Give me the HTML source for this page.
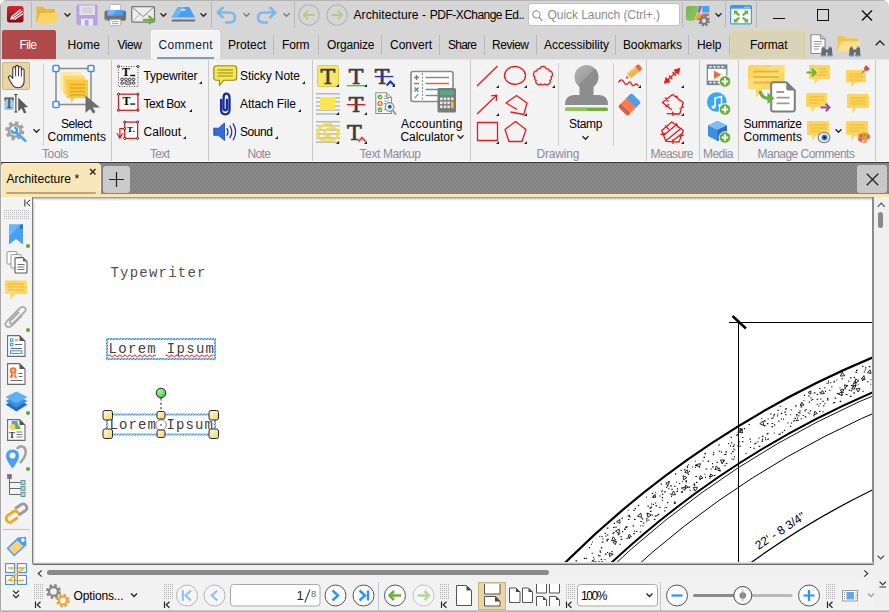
<!DOCTYPE html>
<html><head><meta charset="utf-8"><title>Architecture - PDF-XChange Editor</title>
<style>
*{box-sizing:border-box;margin:0;padding:0}
html,body{width:889px;height:612px;overflow:hidden;background:#fff;font-family:"Liberation Sans",sans-serif;font-size:12px;color:#000}
#app{position:relative;width:889px;height:612px;overflow:hidden;background:#d6d6d6;border-radius:7px 7px 0 0}
#app div,#app span,#app svg{position:absolute}
#app svg{overflow:visible}
#titlebar{left:0;top:0;width:889px;height:30px;background:#d6d6d6}
#tabrow{left:0;top:30px;width:889px;height:30px;background:#d6d6d6}
#ribbon{left:0;top:59px;width:889px;height:103px;background:#f3f3f3;border-top:1px solid #e5e5e5;border-bottom:1px solid #fdfdfd}
#doctabs{left:0;top:162px;width:889px;height:32px;background:#868686}
#yline{left:0;top:194px;width:889px;height:3px;background:#fae6b4}
#sidebar{left:0;top:197px;width:33px;height:415px;background:#f3f3f3}
#doc{left:32px;top:197px;width:840px;height:367px;background:linear-gradient(to right,#c8c8c8 0,#f0f0f0 1.500px,#fff 3px);border-left:1px solid #7c7c7c;overflow:hidden}
#vscroll{left:872px;top:197px;width:17px;height:415px;background:#f0f0f0}
#hscroll{left:33px;top:562px;width:840px;height:18px;background:#f0f0f0}
#bottombar{left:33px;top:580px;width:840px;height:32px;background:#f2f2f2}
.t{white-space:nowrap;line-height:16px;height:16px}
.vs{width:1px;background:#b9b9b9}
.chev{width:7px;height:4px}
.gd{width:4px;height:4px;border-radius:2px;background:#5aa52e}
.tri{width:0;height:0;border-left:3.500px solid transparent;border-bottom:3.500px solid #222;margin:0.500px 0 0 0}
</style></head><body>
<div id="app">
<!--TITLEBAR-->
<div style="left:0;top:0;width:1px;height:612px;background:#a8a8a8;z-index:5"></div>
<div style="left:0;top:610px;width:889px;height:2px;background:linear-gradient(to bottom,#d0d0d0,#a8a8a8);z-index:5"></div>
<div style="left:0;top:0;width:889px;height:1px;background:#b4b4b4;z-index:5"></div>
<div id="titlebar">
<!-- app icon -->
<svg style="left:7px;top:5.500px" width="17" height="17" viewBox="0 0 17 17"><defs><linearGradient id="gApp" x1="0" y1="0" x2="0" y2="1"><stop offset="0" stop-color="#d8242e"/><stop offset="0.550" stop-color="#b01820"/><stop offset="1" stop-color="#7a0a10"/></linearGradient></defs><rect x="0" y="0" width="16.500" height="16.500" rx="2.500" fill="url(#gApp)"/><path d="M5 10.500 L13.500 3.800 M6.300 12 L15 5.500 M7.800 13.300 L15.500 8" stroke="#fff" stroke-width="1.300" stroke-linecap="round" fill="none"/><path d="M3 13.500 L4.300 10 L7.500 13.300 Z" fill="#fff"/></svg>
<div class="vs" style="left:31px;top:2px;height:26px"></div>
<!-- folder -->
<svg style="left:36px;top:6px" width="24" height="18" viewBox="0 0 24 18"><path d="M0.5 2 Q0.5 0.8 1.7 0.8 L7 0.8 L9 3 L18 3 Q19 3 19 4 L19 17 L0.5 17 Z" fill="#e9b83a"/><path d="M4.2 7 L23.3 7 L19.3 17.3 L0.6 17.3 Z" fill="#fcd462"/></svg>
<svg class="chev" style="left:64px;top:13px" viewBox="0 0 7 4"><path d="M0.5 0.3 L3.5 3.3 L6.5 0.3" stroke="#222" stroke-width="1.3" fill="none"/></svg>
<!-- save -->
<svg style="left:76px;top:4px" width="22" height="22" viewBox="0 0 22 22"><path d="M0.300 2 Q0.300 0.400 1.900 0.400 L20 0.400 Q21.700 0.400 21.700 2 L21.700 20 Q21.700 21.600 20 21.600 L2.500 21.600 L0.300 19.500 Z" fill="#b8a3dc"/><rect x="3.400" y="1.600" width="15.600" height="9.400" rx="0.800" fill="#e3e2e8"/><path d="M6 4.200 H16.500 M6 6.300 H16.500 M6 8.400 H16.500" stroke="#c4c2cc" stroke-width="0.900"/><rect x="5" y="14.700" width="12" height="7" fill="#ece9f5"/><rect x="8.800" y="16" width="3.700" height="5.600" fill="#b8a3dc"/></svg>
<!-- printer -->
<svg style="left:104px;top:4px" width="23" height="22" viewBox="0 0 23 22"><rect x="0.500" y="6.600" width="21.500" height="10.200" rx="2" fill="#707070"/><rect x="5.700" y="0.500" width="11" height="6.500" rx="0.800" fill="#fdfdfd" stroke="#a8a8a8" stroke-width="0.800"/><rect x="3.500" y="6" width="15.500" height="5.600" fill="#4aa0f0"/><path d="M3.500 6 H12 L8 11.600 H3.500 Z" fill="#72b8f6"/><rect x="5.700" y="15.400" width="11" height="6.200" rx="0.800" fill="#fdfdfd" stroke="#a8a8a8" stroke-width="0.800"/><path d="M7.800 17.600 H14.600 M7.800 19.600 H14.600" stroke="#6ab0f0" stroke-width="1"/><rect x="1.800" y="15.400" width="1.600" height="1" fill="#e8e8e8"/></svg>
<!-- mail -->
<svg style="left:131px;top:6px" width="26" height="19" viewBox="0 0 26 19"><rect x="0.700" y="0.700" width="22.800" height="15.400" rx="1" fill="#ededed" stroke="#7a7a7a" stroke-width="1.300"/><path d="M1 1 L12 10.500 L23 1" stroke="#8a8a8a" stroke-width="1" fill="none"/><path d="M1.200 15.600 L9 8 M23 15.600 L15 8" stroke="#b0b0b0" stroke-width="0.900" fill="none"/><path d="M12 14 H22 M17.800 10.200 L22.200 14 L17.800 17.800" stroke="#6bb03c" stroke-width="2.300" fill="none"/></svg>
<svg class="chev" style="left:160px;top:13px" viewBox="0 0 7 4"><path d="M0.5 0.3 L3.5 3.3 L6.5 0.3" stroke="#222" stroke-width="1.3" fill="none"/></svg>
<!-- scanner -->
<svg style="left:171px;top:6px" width="25" height="16" viewBox="0 0 25 16"><path d="M6.800 1 L18.200 1 L24 11.500 L0.500 11.500 Z" fill="#4aa0f0"/><path d="M6.800 1 L14 1 L6 11.500 L0.500 11.500 Z" fill="#6cb6f6"/><rect x="10" y="3" width="4.400" height="1.600" rx="0.500" fill="#fff"/><rect x="0.500" y="13.400" width="23.800" height="2" rx="1" fill="#6e6e6e"/></svg>
<svg class="chev" style="left:200px;top:13px" viewBox="0 0 7 4"><path d="M0.5 0.3 L3.5 3.3 L6.5 0.3" stroke="#222" stroke-width="1.3" fill="none"/></svg>
<div class="vs" style="left:211px;top:2px;height:26px"></div>
<!-- undo -->
<svg style="left:216px;top:6px" width="21" height="18" viewBox="0 0 21 18"><path d="M7.5 1 L1.8 6.5 L7.5 12 M2.5 6.5 H13 Q19 6.5 19 11.5 Q19 16.5 13 16.5 H9" stroke="#7db9ea" stroke-width="2.6" fill="none" stroke-linejoin="round"/></svg>
<svg class="chev" style="left:243px;top:13px" viewBox="0 0 7 4"><path d="M0.5 0.3 L3.5 3.3 L6.5 0.3" stroke="#7a7a7a" stroke-width="1.3" fill="none"/></svg>
<!-- redo -->
<svg style="left:256px;top:6px" width="21" height="18" viewBox="0 0 21 18"><path d="M13.5 1 L19.2 6.5 L13.5 12 M18.5 6.5 H8 Q2 6.5 2 11.5 Q2 16.5 8 16.5 H12" stroke="#7db9ea" stroke-width="2.6" fill="none" stroke-linejoin="round"/></svg>
<svg class="chev" style="left:283px;top:13px" viewBox="0 0 7 4"><path d="M0.5 0.3 L3.5 3.3 L6.5 0.3" stroke="#7a7a7a" stroke-width="1.3" fill="none"/></svg>
<div class="vs" style="left:294px;top:2px;height:26px"></div>
<!-- nav circles -->
<svg style="left:298px;top:4px" width="22" height="22" viewBox="0 0 22 22"><circle cx="11" cy="11" r="10.2" fill="none" stroke="#b4b4b4" stroke-width="1.1"/><path d="M16.5 11 H6 M10 6.8 L5.8 11 L10 15.2" stroke="#a7cf8a" stroke-width="1.8" fill="none"/></svg>
<svg style="left:326px;top:4px" width="22" height="22" viewBox="0 0 22 22"><circle cx="11" cy="11" r="10.2" fill="none" stroke="#b4b4b4" stroke-width="1.1"/><path d="M5.5 11 H16 M12 6.8 L16.2 11 L12 15.2" stroke="#a7cf8a" stroke-width="1.8" fill="none"/></svg>
<span class="t" style="left:353.5px;top:6.8px;font-size:12px;letter-spacing:0.09px;color:#000;">Architecture - </span><span class="t" style="left:429.8px;top:6.8px;font-size:12px;letter-spacing:-0.53px;color:#000;">PDF-XChange Ed..</span>
<!-- search -->
<div style="left:528px;top:3px;width:152px;height:23px;background:#fff;border:1px solid #c3c3c3;border-radius:3px"></div>
<svg style="left:532px;top:10px" width="11" height="11.800" viewBox="0 0 13 14"><circle cx="5.2" cy="5.2" r="4.3" fill="none" stroke="#8a8a8a" stroke-width="1.2"/><path d="M8.3 8.5 L12.3 13" stroke="#8a8a8a" stroke-width="1.4"/></svg>
<span class="t" style="left:547.5px;top:6.8px;font-size:12px;letter-spacing:-0.06px;color:#8c8c8c;">Quick Launch (Ctrl+.)</span>
<div class="vs" style="left:682px;top:2px;height:26px"></div>
<!-- ui options -->
<svg style="left:686px;top:5px" width="25" height="23" viewBox="0 0 25 23"><path d="M0 2.800 Q0 1 1.800 1 L13 1 L8 15.600 L1.800 15.600 Q0 15.600 0 13.800 Z" fill="#7cb955"/><path d="M0 13 L10 1 L13 1 L8 15.600 L1.800 15.600 Q0 15.600 0 13.800 Z" fill="#8ac463" opacity="0.600"/><path d="M13.600 1 L15.800 1 L13.800 7.500 L11.400 7.500 Z" fill="#8a52c8"/><rect x="16.200" y="1" width="7.200" height="6.500" fill="#4aa3f2"/><path d="M11 8.600 L16 8.600 L14 15 L8.800 15 Z" fill="#f5a623"/><rect x="16.500" y="8.600" width="6.500" height="2.500" fill="#e8604a"/><circle cx="18" cy="15.700" r="4.300" fill="none" stroke="#777" stroke-width="3" stroke-dasharray="1.900 1.480"/><circle cx="18" cy="15.700" r="3.200" fill="#d6d6d6" stroke="#777" stroke-width="1.900"/></svg>
<svg class="chev" style="left:715px;top:13px" viewBox="0 0 7 4"><path d="M0.5 0.3 L3.5 3.3 L6.5 0.3" stroke="#222" stroke-width="1.3" fill="none"/></svg>
<div class="vs" style="left:725px;top:2px;height:26px"></div>
<!-- fullscreen -->
<svg style="left:730px;top:4.500px" width="22" height="19.500" viewBox="0 0 22 19.500"><rect x="0.600" y="0.600" width="20.800" height="18.300" rx="1.200" fill="#fff" stroke="#3d9af0" stroke-width="1.200"/><path d="M0.600 1.800 Q0.600 0.600 1.800 0.600 H20.200 Q21.400 0.600 21.400 1.800 V3.800 H0.600 Z" fill="#3d9af0"/><g fill="#fff"><rect x="14.500" y="1.700" width="1.100" height="1.100"/><rect x="16.600" y="1.700" width="1.100" height="1.100"/><rect x="18.700" y="1.700" width="1.100" height="1.100"/></g><g fill="#6bb03c"><path d="M3.800 5.500 H8.200 L3.800 9.900 Z M18.200 5.500 H13.800 L18.200 9.900 Z M3.800 17.500 H8.200 L3.800 13.100 Z M18.200 17.500 H13.800 L18.200 13.100 Z"/></g><path d="M5.500 7.200 L9.300 10.500 M16.500 7.200 L12.700 10.500 M5.500 15.800 L9.300 12.500 M16.500 15.800 L12.700 12.500" stroke="#6bb03c" stroke-width="2.200"/></svg>
<div class="vs" style="left:756px;top:2px;height:26px"></div>
<!-- window controls -->
<div style="left:773px;top:18px;width:12px;height:1px;background:#111"></div>
<div style="left:817px;top:9px;width:12px;height:12px;border:1.5px solid #111"></div>
<svg style="left:861px;top:10px" width="12" height="11" viewBox="0 0 12 11"><path d="M1 0.5 L11 10.5 M11 0.5 L1 10.5" stroke="#111" stroke-width="1.4"/></svg>
</div>
<!--TABROW-->
<div id="tabrow">
<div style="left:2px;top:0;width:54px;height:29px;background:#b04a4a;border-radius:2px 2px 0 0"></div><div style="left:2px;top:29px;width:54px;height:1px;background:#d09c9c"></div>
<div style="left:151px;top:0;width:69px;height:30px;background:#f3f3f3;border:1px solid #fbfbfb;border-bottom:none;border-radius:3px 3px 0 0"></div>
<div style="left:157px;top:27px;width:56.500px;height:2px;background:#7d9dbf"></div>
<div style="left:732px;top:0;width:73px;height:29px;background:#d9d3b8;border-left:1px solid #e3d28e;border-right:1px solid #e3d28e;border-top:1px solid #e3d9a8"></div>
<div class="vs" style="left:108px;top:5px;height:20px"></div>
<div class="vs" style="left:273px;top:5px;height:20px"></div>
<div class="vs" style="left:318px;top:5px;height:20px"></div>
<div class="vs" style="left:381px;top:5px;height:20px"></div>
<div class="vs" style="left:439px;top:5px;height:20px"></div>
<div class="vs" style="left:484px;top:5px;height:20px"></div>
<div class="vs" style="left:536px;top:5px;height:20px"></div>
<div class="vs" style="left:615px;top:5px;height:20px"></div>
<div class="vs" style="left:688px;top:5px;height:20px"></div>
<div class="vs" style="left:729px;top:5px;height:20px"></div>
</div>
<span class="t" style="left:19.5px;top:36.8px;font-size:12px;letter-spacing:-0.61px;color:#fff;">File</span>
<span class="t" style="left:67.5px;top:36.8px;font-size:12px;letter-spacing:0.16px;color:#000;">Home</span>
<span class="t" style="left:117.5px;top:36.8px;font-size:12px;letter-spacing:-0.43px;color:#000;">View</span>
<span class="t" style="left:158.5px;top:36.8px;font-size:12px;letter-spacing:0.33px;color:#10204a;">Comment</span>
<span class="t" style="left:228.0px;top:36.8px;font-size:12px;letter-spacing:-0.00px;color:#000;">Protect</span>
<span class="t" style="left:282.0px;top:36.8px;font-size:12px;letter-spacing:-0.17px;color:#000;">Form</span>
<span class="t" style="left:327.0px;top:36.8px;font-size:12px;letter-spacing:-0.17px;color:#000;">Organize</span>
<span class="t" style="left:390.0px;top:36.8px;font-size:12px;letter-spacing:-0.00px;color:#000;">Convert</span>
<span class="t" style="left:448.0px;top:36.8px;font-size:12px;letter-spacing:-0.76px;color:#000;">Share</span>
<span class="t" style="left:492.0px;top:36.8px;font-size:12px;letter-spacing:-0.47px;color:#000;">Review</span>
<span class="t" style="left:544.0px;top:36.8px;font-size:12px;letter-spacing:-0.03px;color:#000;">Accessibility</span>
<span class="t" style="left:623.0px;top:36.8px;font-size:12px;letter-spacing:-0.13px;color:#000;">Bookmarks</span>
<span class="t" style="left:697.0px;top:36.8px;font-size:12px;letter-spacing:-0.06px;color:#000;">Help</span>
<span class="t" style="left:750.0px;top:36.8px;font-size:12px;letter-spacing:-0.10px;color:#000;">Format</span>
<!-- find icons -->
<svg style="left:810px;top:34px" width="24" height="23" viewBox="0 0 24 23"><path d="M1 0.7 L10.5 0.7 L15 5 L15 19.5 L1 19.5 Z" fill="#fff" stroke="#8a8a8a" stroke-width="1.1"/><path d="M10.5 0.7 L10.5 5 L15 5" fill="#c8c8c8" stroke="#8a8a8a" stroke-width="0.9"/><path d="M3.5 7.5 H12 M3.5 10 H12 M3.5 12.5 H10 M3.5 15 H9" stroke="#9a9a9a" stroke-width="1"/><g fill="#6a6a6a"><path d="M11 22 L11.600 14 L15 14 L16.200 22 Z M22.500 22 L21.900 14 L18.500 14 L17.300 22 Z"/><rect x="15" y="15.500" width="3.500" height="3"/></g><path d="M12 13.300 H14.800 M18.700 13.300 H21.500 M11.200 21.700 H16 M17.500 21.700 H22.300" stroke="#4a9ff0" stroke-width="1.400"/></svg>
<svg style="left:837px;top:35px" width="25" height="22" viewBox="0 0 25 22"><path d="M0.5 2 Q0.5 1 1.5 1 L7 1 L9 3.2 L20 3.2 Q21 3.2 21 4.2 L21 16.5 L0.5 16.5 Z" fill="#f0c64e"/><path d="M4 6.5 L24 6.5 L20.5 16.8 L0.6 16.8 Z" fill="#fde08a"/><g fill="#6a6a6a"><path d="M12 21 L12.600 13 L16 13 L17.200 21 Z M23.500 21 L22.900 13 L19.500 13 L18.300 21 Z"/><rect x="16" y="14.500" width="3.500" height="3"/></g><path d="M13 12.300 H15.800 M19.700 12.300 H22.500 M12.200 20.700 H17 M18.500 20.700 H23.300" stroke="#4a9ff0" stroke-width="1.400"/></svg>
<svg style="left:875px;top:40px" width="10" height="6" viewBox="0 0 10 6"><path d="M0.7 5.3 L5 1 L9.3 5.3" stroke="#222" stroke-width="1.3" fill="none"/></svg>
<!--RIBBON-->
<div id="ribbon">
</div>
<!-- group separators -->
<div class="vs" style="left:111px;top:60px;height:101px;background:#c9c9c9"></div>
<div class="vs" style="left:208px;top:60px;height:101px;background:#c9c9c9"></div>
<div class="vs" style="left:312px;top:60px;height:101px;background:#c9c9c9"></div>
<div class="vs" style="left:470px;top:60px;height:101px;background:#c9c9c9"></div>
<div class="vs" style="left:646px;top:60px;height:101px;background:#c9c9c9"></div>
<div class="vs" style="left:699px;top:60px;height:101px;background:#c9c9c9"></div>
<div class="vs" style="left:738px;top:60px;height:101px;background:#c9c9c9"></div>
<div class="vs" style="left:875px;top:60px;height:101px;background:#c9c9c9"></div>
<div class="vs" style="left:43px;top:63px;height:83px;background:#cfcfcf"></div>
<div class="vs" style="left:558px;top:63px;height:83px;background:#cfcfcf"></div>
<div class="vs" style="left:613px;top:63px;height:83px;background:#cfcfcf"></div>
<!-- group labels -->
<span class="t" style="left:42.0px;top:145.8px;font-size:12px;letter-spacing:-0.38px;color:#8b8b9b;">Tools</span>
<span class="t" style="left:150.0px;top:145.8px;font-size:12px;letter-spacing:-0.67px;color:#8b8b9b;">Text</span>
<span class="t" style="left:247.5px;top:145.8px;font-size:12px;letter-spacing:-0.62px;color:#8b8b9b;">Note</span>
<span class="t" style="left:359.5px;top:145.8px;font-size:12px;letter-spacing:-0.39px;color:#8b8b9b;">Text Markup</span>
<span class="t" style="left:536.5px;top:145.8px;font-size:12px;letter-spacing:-0.17px;color:#8b8b9b;">Drawing</span>
<span class="t" style="left:650.5px;top:145.8px;font-size:12px;letter-spacing:-0.61px;color:#8b8b9b;">Measure</span>
<span class="t" style="left:703.0px;top:145.8px;font-size:12px;letter-spacing:-0.55px;color:#8b8b9b;">Media</span>
<span class="t" style="left:757.5px;top:145.8px;font-size:12px;letter-spacing:-0.52px;color:#8b8b9b;">Manage Comments</span>
<!-- button labels -->
<span class="t" style="left:61.0px;top:115.8px;font-size:12px;letter-spacing:-0.47px;color:#000;">Select</span>
<span class="t" style="left:47.5px;top:128.8px;font-size:12px;letter-spacing:0.07px;color:#000;">Comments</span>
<span class="t" style="left:143.5px;top:67.8px;font-size:12px;letter-spacing:-0.15px;color:#000;">Typewriter</span>
<span class="t" style="left:143.5px;top:95.8px;font-size:12px;letter-spacing:-0.50px;color:#000;">Text Box</span>
<span class="t" style="left:143.5px;top:124.3px;font-size:12px;letter-spacing:0.02px;color:#000;">Callout</span>
<span class="t" style="left:240.0px;top:67.8px;font-size:12px;letter-spacing:-0.07px;color:#000;">Sticky Note</span>
<span class="t" style="left:240.0px;top:95.8px;font-size:12px;letter-spacing:-0.07px;color:#000;">Attach File</span>
<span class="t" style="left:240.0px;top:124.3px;font-size:12px;letter-spacing:-0.42px;color:#000;">Sound</span>
<span class="t" style="left:401.0px;top:115.8px;font-size:12px;letter-spacing:0.24px;color:#000;">Accounting</span>
<span class="t" style="left:400.5px;top:128.8px;font-size:12px;letter-spacing:-0.06px;color:#000;">Calculator</span>
<span class="t" style="left:569.0px;top:115.8px;font-size:12px;letter-spacing:-0.30px;color:#000;">Stamp</span>
<span class="t" style="left:743.5px;top:115.8px;font-size:12px;letter-spacing:-0.27px;color:#000;">Summarize</span>
<span class="t" style="left:743.5px;top:128.8px;font-size:12px;letter-spacing:0.07px;color:#000;">Comments</span>
<!-- TOOLS group -->
<div style="left:2px;top:62px;width:28px;height:27.500px;background:#e8d5a3;border:1px solid #cbb782;border-radius:2px"></div>
<!-- hand -->
<svg style="left:6.500px;top:63.500px" width="21" height="25.500" viewBox="0 0 19 23"><path d="M5.200 13 L5.200 4 Q5.200 2.600 6.500 2.600 Q7.800 2.600 7.800 4 L7.800 2.600 Q7.800 1.200 9.100 1.200 Q10.400 1.200 10.400 2.600 L10.400 3.400 Q10.400 2.200 11.700 2.200 Q13 2.200 13 3.600 L13 5.400 Q13 4.400 14.200 4.400 Q15.500 4.400 15.500 5.800 L15.500 15 Q15.500 21.500 10 21.500 Q6.500 21.500 4.800 18.500 L1.400 12.800 Q0.800 11.400 2 10.800 Q3.200 10.400 4 11.600 Z" fill="#fff" stroke="#3c3c3c" stroke-width="1" stroke-linejoin="round"/><path d="M7.800 4 V11 M10.400 3.400 V11 M13 5.400 V11.500" stroke="#3c3c3c" stroke-width="0.900"/></svg>
<!-- select text -->
<svg style="left:4px;top:94px" width="25" height="21" viewBox="0 0 25 21"><rect x="0.300" y="2.800" width="9.600" height="13.200" fill="#9bcbf2"/><text x="5.100" y="13.800" font-family="DejaVu Serif,Liberation Serif,serif" font-size="13" text-anchor="middle" fill="#555" stroke="#555" stroke-width="0.500">T</text><path d="M10.400 0.500 H13.400 M11.900 0.500 V18 M10.400 18 H13.400" stroke="#333" stroke-width="1" fill="none"/><path d="M14.200 3.400 L14.200 17.200 L17.600 14.200 L20 19.600 L22.400 18.500 L20 13.400 L24 13 Z" fill="#5a5a5a"/></svg>
<!-- gear + wrench -->
<svg style="left:4px;top:120px" width="24" height="24" viewBox="0 0 24 24"><circle cx="10.800" cy="10.800" r="7.400" fill="none" stroke="#a2a2a2" stroke-width="4.200" stroke-dasharray="3.100 2.712"/><circle cx="10.800" cy="10.800" r="6" fill="#f3f3f3" stroke="#a2a2a2" stroke-width="2.600"/><path d="M12.300 12.400 L21.300 20.800" stroke="#4aa8f8" stroke-width="2.700" stroke-linecap="round"/><circle cx="10.300" cy="10.300" r="2.600" fill="none" stroke="#3d9af5" stroke-width="2.300" stroke-dasharray="12.300 4.040" transform="rotate(-91 10.300 10.300)"/></svg>
<svg class="chev" style="left:33px;top:129px" viewBox="0 0 7 4"><path d="M0.5 0.3 L3.5 3.3 L6.5 0.3" stroke="#222" stroke-width="1.3" fill="none"/></svg>
<!-- select comments -->
<svg style="left:52px;top:64px" width="49" height="50" viewBox="0 0 49 50"><rect x="4" y="4.5" width="35" height="36" fill="none" stroke="#8f8f8f" stroke-width="1.6"/><rect x="8.5" y="8" width="21" height="19" rx="1" fill="#fde9a6"/><rect x="11.500" y="11.5" width="21" height="19" rx="1" fill="#fbd86e"/><path d="M15.5 15.5 H35 Q36 15.5 36 16.5 V33 Q36 34 35 34 H23 L19 39 V34 H15.5 Q14.5 34 14.500 33 V16.5 Q14.5 15.5 15.5 15.5 Z" fill="#f9c83e"/><path d="M18 20.500 H33 M18 24 H33 M18 27.500 H33 M18 31 H33" stroke="#e5a91f" stroke-width="1.5"/><g fill="#fff" stroke="#3d8fe0" stroke-width="1.5"><rect x="1" y="1.5" width="6" height="6" rx="1"/><rect x="36" y="1.5" width="6" height="6" rx="1"/><rect x="1" y="37.5" width="6" height="6" rx="1"/></g><path d="M33.500 31.500 L33.500 49 L38 45 L41 49.500 L43.500 48 L40.700 43.500 L48 43.500 Z" fill="#6e6e6e"/></svg>
<!-- TEXT group -->
<!-- typewriter -->
<svg style="left:112px;top:60px" width="30" height="30" viewBox="112 60 30 30"><rect x="118.500" y="66.500" width="19.500" height="20" fill="none" stroke="#555" stroke-width="1" stroke-dasharray="1 1.500"/><circle cx="118.5" cy="66.5" r="1.100" fill="#f3f3f3" stroke="#222" stroke-width="0.900"/><circle cx="138" cy="66.5" r="1.100" fill="#f3f3f3" stroke="#222" stroke-width="0.900"/><text x="126" y="76.200" font-family="DejaVu Serif,Liberation Serif,serif" font-weight="bold" font-size="10.500" text-anchor="middle" fill="#111">T</text><rect x="130.200" y="74.800" width="5" height="1.400" fill="#111"/><g fill="none" stroke="#222" stroke-width="0.900"><rect x="120.800" y="78.200" width="2.600" height="2.300" rx="0.900"/><rect x="124.600" y="78.200" width="2.600" height="2.300" rx="0.900"/><rect x="128.400" y="78.200" width="2.600" height="2.300" rx="0.900"/><rect x="132.200" y="78.200" width="2.600" height="2.300" rx="0.900"/><rect x="120.800" y="81.900" width="2.600" height="2.300" rx="0.900"/><rect x="124.900" y="81.900" width="6" height="2.300" rx="0.900"/><rect x="132.200" y="81.900" width="2.600" height="2.300" rx="0.900"/></g></svg>
<!-- text box -->
<svg style="left:112px;top:90px" width="30" height="24" viewBox="112 90 30 24"><rect x="118.500" y="94.200" width="19.400" height="16.100" fill="#fff" stroke="#e81818" stroke-width="1.300"/><circle cx="118.5" cy="94.2" r="1.100" fill="#f3f3f3" stroke="#222" stroke-width="0.900"/><circle cx="137.9" cy="94.2" r="1.100" fill="#f3f3f3" stroke="#222" stroke-width="0.900"/><circle cx="118.5" cy="110.3" r="1.100" fill="#f3f3f3" stroke="#222" stroke-width="0.900"/><circle cx="137.9" cy="110.3" r="1.100" fill="#f3f3f3" stroke="#222" stroke-width="0.900"/><text x="126.400" y="104.600" font-family="DejaVu Serif,Liberation Serif,serif" font-weight="bold" font-size="10.500" text-anchor="middle" fill="#111">T</text><rect x="130.200" y="103.400" width="5" height="1.300" fill="#111"/></svg>
<!-- callout -->
<svg style="left:112px;top:118px" width="30" height="24" viewBox="112 118 30 24"><rect x="124.700" y="122.100" width="12.900" height="16.300" fill="#fff" stroke="#e81818" stroke-width="1.300"/><path d="M124.700 128.700 H119.900 V137.800 M117 133.200 L119.900 138.200 L122.600 133.200" fill="none" stroke="#e81818" stroke-width="1.200"/><circle cx="124.7" cy="122.1" r="1.100" fill="#f3f3f3" stroke="#222" stroke-width="0.900"/><circle cx="137.6" cy="122.1" r="1.100" fill="#f3f3f3" stroke="#222" stroke-width="0.900"/><circle cx="124.7" cy="138.4" r="1.100" fill="#f3f3f3" stroke="#222" stroke-width="0.900"/><circle cx="137.6" cy="138.4" r="1.100" fill="#f3f3f3" stroke="#222" stroke-width="0.900"/><circle cx="124.7" cy="128.7" r="1.100" fill="#f3f3f3" stroke="#222" stroke-width="0.900"/><text x="130" y="132" font-family="DejaVu Serif,Liberation Serif,serif" font-weight="bold" font-size="8" text-anchor="middle" fill="#111">T</text><rect x="133.200" y="130.800" width="1.300" height="1.200" fill="#111"/></svg>
<div class="tri" style="left:199px;top:80px"></div>
<div class="tri" style="left:189px;top:108px"></div>
<div class="tri" style="left:183px;top:135px"></div>
<!-- NOTE group -->
<!-- sticky note -->
<svg style="left:213px;top:65px" width="25" height="22" viewBox="0 0 25 22"><path d="M3.500 0.8 H21 Q23.700 0.8 23.700 3.500 V12.500 Q23.700 15.200 21 15.200 H11 L6.500 20.500 V15.200 H3.500 Q0.8 15.200 0.8 12.500 V3.500 Q0.8 0.8 3.500 0.8 Z" fill="#f6e64f" stroke="#8f8a1e" stroke-width="1.1" stroke-linejoin="round"/><path d="M4.500 5 H20 M4.500 8 H20 M4.500 11 H20" stroke="#8f8a1e" stroke-width="1"/></svg>
<!-- paperclip -->
<svg style="left:215px;top:90px" width="20" height="28" viewBox="215 90 20 28"><path d="M221.100 100 V110 Q221.100 114.300 225.300 114.300 Q229.500 114.300 229.500 110 V98 Q229.500 93.600 226.300 93.600 Q223.600 93.600 223.600 97.500 V108.500 Q223.600 110.400 225.300 110.400 Q226.900 110.400 226.900 108.500 V100" fill="none" stroke="#1a2a9a" stroke-width="2.300" stroke-linecap="round"/><path d="M225.300 98 V108" stroke="#b8c4f0" stroke-width="1"/></svg>
<!-- sound -->
<svg style="left:213px;top:122px" width="25" height="20" viewBox="0 0 25 20"><path d="M0.8 6.200 H5.500 L11.500 1 V18.500 L5.500 13.300 H0.8 Z" fill="#2f6fdb" stroke="#1b3fa0" stroke-width="0.8"/><path d="M14 6.500 Q16 9.800 14 13.200 M17 4 Q20.500 9.800 17 15.600 M20.200 1.800 Q25 9.800 20.200 17.800" fill="none" stroke="#24379a" stroke-width="1.3" stroke-linecap="round"/></svg>
<div class="tri" style="left:302px;top:80px"></div>
<div class="tri" style="left:298px;top:108px"></div>
<div class="tri" style="left:275px;top:135px"></div>
<!-- TEXT MARKUP group -->
<div style="left:317px;top:65px;width:22px;height:21.500px;background:#f9e868;border:1px solid #e2ca4c;border-radius:2px"></div>
<svg style="left:312px;top:60px" width="90" height="88" viewBox="312 60 90 88">
<text x="327.8" y="83.7" font-family="DejaVu Serif,Liberation Serif,serif" font-size="21.2" text-anchor="middle" fill="#3c3c3c" stroke="#3c3c3c" stroke-width="0.55" transform="translate(327.8,0) scale(1.04,1) translate(-327.8,0)">T</text>
<text x="356.1" y="83.7" font-family="DejaVu Serif,Liberation Serif,serif" font-size="21.2" text-anchor="middle" fill="#3c3c3c" stroke="#3c3c3c" stroke-width="0.55" transform="translate(356.1,0) scale(1.04,1) translate(-356.1,0)">T</text><rect x="346.800" y="85" width="18.400" height="1.300" fill="#22d422"/>
<text x="382.2" y="83.7" font-family="DejaVu Serif,Liberation Serif,serif" font-size="21.2" text-anchor="middle" fill="#3c3c3c" stroke="#3c3c3c" stroke-width="0.55" transform="translate(382.2,0) scale(1.04,1) translate(-382.2,0)">T</text><rect x="374.700" y="75.900" width="18.500" height="1.300" fill="#1a2fe0"/><path d="M386.600 85.400 L390.400 81.600 L394.200 85.400" fill="none" stroke="#1a2fe0" stroke-width="2.100"/>
<path d="M316 93.800 H340 M316 97.800 H340 M316 102 H340 M316 106 H340 M316 110 H340 M316 114 H340" stroke="#b9b9b9" stroke-width="1.400"/><rect x="320" y="97" width="15.300" height="13" fill="#f9e650"/>
<text x="356.1" y="111.8" font-family="DejaVu Serif,Liberation Serif,serif" font-size="21.2" text-anchor="middle" fill="#3c3c3c" stroke="#3c3c3c" stroke-width="0.55" transform="translate(356.1,0) scale(1.04,1) translate(-356.1,0)">T</text><rect x="346.800" y="104" width="18.400" height="1.300" fill="#e81818"/>
<path d="M316 121.800 H340 M316 125.900 H340 M316 130 H340 M316 134 H340 M316 138 H340 M316 142.200 H340" stroke="#b9b9b9" stroke-width="1.400"/>
<path d="M331.500 124.200 Q322 122.500 318.500 130 Q315.800 139.500 326 141 Q337.500 141.500 338.200 133 Q338 127.500 330 128.500 Q324 129.500 324.500 133.500 Q325.500 136.500 330 135.500" fill="none" stroke="#f2df3a" stroke-width="2.500" stroke-linecap="round"/>
<text x="354.4" y="139.8" font-family="DejaVu Serif,Liberation Serif,serif" font-size="21.2" text-anchor="middle" fill="#3c3c3c" stroke="#3c3c3c" stroke-width="0.55" transform="translate(354.4,0) scale(1.04,1) translate(-354.4,0)">T</text><path d="M358.300 141.400 L362 137.700 L365.700 141.400" fill="none" stroke="#e05050" stroke-width="2.100"/>
</svg>
<div class="tri" style="left:336px;top:83.500px"></div>
<div class="tri" style="left:364px;top:83.500px"></div>
<div class="tri" style="left:392px;top:83.500px"></div>
<svg style="left:375px;top:92px" width="22" height="24" viewBox="0 0 22 24"><path d="M0.800 0.800 H11.500 L16.500 5.500 V21.500 H0.800 Z" fill="#fff" stroke="#8f8f8f" stroke-width="1.100"/><path d="M11.500 0.800 V5.500 H16.500" fill="#d5d5d5" stroke="#8f8f8f" stroke-width="0.900"/><circle cx="5" cy="5" r="2.500" fill="#6bb03c"/><circle cx="5" cy="11.500" r="2" fill="#fff" stroke="#f0703a" stroke-width="1.500"/><circle cx="5" cy="17.800" r="2.500" fill="#6bb03c"/><path d="M3.800 5 L4.800 6 L6.300 4 M3.800 17.800 L4.800 18.800 L6.300 16.800" fill="none" stroke="#fff" stroke-width="0.800"/><path d="M9 4 H11 M9 6.500 H14 M9 9 H14 M9 11.500 H11 M9 17.500 H10.500" stroke="#9a9a9a" stroke-width="0.900"/><circle cx="14.500" cy="15" r="4.300" fill="#e6f2fc" stroke="#8f8f8f" stroke-width="1.200"/><circle cx="14.800" cy="14.800" r="2" fill="#2f7fd8"/><circle cx="14.800" cy="14.800" r="0.900" fill="#123"/><path d="M17.600 18.300 L21 22.500" stroke="#8f8f8f" stroke-width="1.800"/></svg>
<div class="tri" style="left:336px;top:111.500px"></div>
<div class="tri" style="left:364px;top:111.500px"></div>
<div class="tri" style="left:336px;top:140px"></div>
<div class="tri" style="left:364px;top:140px"></div>
<!-- accounting calculator -->
<svg style="left:410px;top:70px" width="47" height="44" viewBox="0 0 47 44"><rect x="1" y="1.500" width="42" height="30" rx="2" fill="#fff" stroke="#8a8a8a" stroke-width="1.600"/><path d="M12.500 3 V30" stroke="#8a8a8a" stroke-width="1.200" stroke-dasharray="2 1.500"/><path d="M4 7.500 H9 M6.500 5 V10" stroke="#777" stroke-width="1.400"/><path d="M4 13.500 H9" stroke="#e8603a" stroke-width="1.600"/><path d="M4.500 17.500 L8.500 21.500 M8.500 17.500 L4.500 21.500" stroke="#3d8fe0" stroke-width="1.500"/><path d="M4.500 28 L8.500 24" stroke="#999" stroke-width="1.400"/><path d="M15.500 7.500 H39" stroke="#888" stroke-width="1.500"/><path d="M15.500 13.500 H39" stroke="#e8603a" stroke-width="1.500"/><path d="M15.500 19.500 H30" stroke="#3d8fe0" stroke-width="1.500"/><path d="M15.500 25.500 H30" stroke="#888" stroke-width="1.500"/><rect x="27.500" y="18" width="18.500" height="24.500" rx="1.500" fill="#7b7b7b"/><rect x="30" y="20.500" width="13.500" height="4.500" fill="#4fae7a"/><g fill="#e6e6e6"><rect x="30" y="27.500" width="2.600" height="2.600"/><rect x="33.700" y="27.500" width="2.600" height="2.600"/><rect x="37.300" y="27.500" width="2.600" height="2.600"/><rect x="30" y="31.500" width="2.600" height="2.600"/><rect x="33.700" y="31.500" width="2.600" height="2.600"/><rect x="37.300" y="31.500" width="2.600" height="2.600"/><rect x="30" y="35.500" width="2.600" height="2.600"/><rect x="33.700" y="35.500" width="2.600" height="2.600"/><rect x="37.300" y="35.500" width="2.600" height="2.600"/><rect x="41" y="27.500" width="2.600" height="2.600"/></g><rect x="41" y="31.500" width="2.600" height="6.600" fill="#f2c230"/></svg>
<svg class="chev" style="left:457px;top:135px" width="8" height="5" viewBox="0 0 7 4"><path d="M0.5 0.3 L3.5 3.3 L6.5 0.3" stroke="#222" stroke-width="1.3" fill="none"/></svg>
<!-- DRAWING group -->
<svg style="left:475px;top:62px" width="75" height="84" viewBox="475 62 75 84"><g fill="none" stroke="#e81a1a" stroke-width="1.300" stroke-linejoin="round"><path d="M477 86 L497.500 66"/><ellipse cx="515" cy="75.500" rx="10.500" ry="9"/><path d="M543.0 66.6 A2.3 2.3 0 0 1 546.0 68.8 A2.3 2.3 0 0 1 549.1 71.0 A2.3 2.3 0 0 1 552.1 73.2 A2.3 2.3 0 0 1 551.0 76.8 A2.3 2.3 0 0 1 549.8 80.4 A2.3 2.3 0 0 1 548.6 84.0 A2.3 2.3 0 0 1 544.9 84.0 A2.3 2.3 0 0 1 541.1 84.0 A2.3 2.3 0 0 1 537.4 84.0 A2.3 2.3 0 0 1 536.2 80.4 A2.3 2.3 0 0 1 535.0 76.8 A2.3 2.3 0 0 1 533.9 73.2 A2.3 2.3 0 0 1 536.9 71.0 A2.3 2.3 0 0 1 540.0 68.8 A2.3 2.3 0 0 1 543.0 66.6Z"/><path d="M477 114 L496.500 95.500 M491 95.800 L496.800 95.200 L496.200 101"/><path d="M517 109.500 L506 103 L516.500 95.500 L527 103 L523.800 114.500 L510.500 112"/><rect x="477.500" y="122.500" width="20" height="18"/><path d="M515.500 121.500 L526 129.500 L522 141.500 L509 141.500 L505 129.500 Z"/></g></svg>
<div class="tri" style="left:496px;top:84px"></div>
<div class="tri" style="left:524px;top:84px"></div>
<div class="tri" style="left:552px;top:84px"></div>
<div class="tri" style="left:496px;top:112px"></div>
<div class="tri" style="left:524px;top:112px"></div>
<div class="tri" style="left:496px;top:140px"></div>
<div class="tri" style="left:524px;top:140px"></div>
<!-- stamp -->
<svg style="left:563.500px;top:64px" width="45" height="48" viewBox="0 0 45 48"><defs><linearGradient id="gSt" x1="0" y1="0" x2="1" y2="1"><stop offset="0" stop-color="#b5b5b5"/><stop offset="0.5" stop-color="#a0a0a0"/><stop offset="0.5" stop-color="#8f8f8f"/><stop offset="1" stop-color="#8a8a8a"/></linearGradient></defs><circle cx="22.500" cy="13" r="12" fill="url(#gSt)"/><path d="M15.500 20 H29.500 V31 H15.500 Z" fill="#8d8d8d"/><path d="M1 41 Q1 31 10 31 H35 Q44 31 44 41 Z" fill="#8d8d8d"/><rect x="1" y="43.500" width="43" height="3.500" rx="1.500" fill="#6bb03c"/><rect x="1" y="43.500" width="22" height="3.500" rx="1.500" fill="#8cc45a"/></svg>
<svg class="chev" style="left:582px;top:136px" width="8" height="5" viewBox="0 0 7 4"><path d="M0.5 0.3 L3.5 3.3 L6.5 0.3" stroke="#222" stroke-width="1.3" fill="none"/></svg>
<!-- pencil -->
<svg style="left:612px;top:60px" width="34" height="30" viewBox="612 60 34 30"><g transform="rotate(-40 626 78.500)"><path d="M626 78.500 L630.500 75.300 H643 Q644.800 75.300 644.800 77 V80 Q644.800 81.700 643 81.700 H630.500 Z" fill="#f5b040"/><path d="M630.500 75.300 H641 V77.400 H630.500 Z" fill="#f9c866"/><path d="M641 75.300 H643 Q644.800 75.300 644.800 77 V80 Q644.800 81.700 643 81.700 H641 Z" fill="#f06048"/><path d="M626 78.500 L630.500 75.300 V81.700 Z" fill="#ead4b4"/><path d="M626 78.500 L627.800 77.200 V79.800 Z" fill="#555"/></g><path d="M618.500 82.500 Q621 78 623.500 81.500 Q625.500 86 628 83.500 Q630 80 631.500 84 Q633 87.500 635 84.500 Q636.500 83 638.500 86" fill="none" stroke="#e81a1a" stroke-width="1.300"/></svg>
<div class="tri" style="left:637.500px;top:84px"></div>
<!-- eraser -->
<svg style="left:618px;top:92px" width="24" height="24" viewBox="0 0 24 24"><path d="M1.500 13 L12 2.500 Q13.500 1 15 2.500 L21.500 9 Q23 10.500 21.500 12 L11 22.500 Q9.500 24 8 22.500 L1.500 16 Q0 14.500 1.500 13 Z" fill="#f47c5a"/><path d="M8.500 6 L12 2.500 Q13.500 1 15 2.500 L21.500 9 Q23 10.500 21.500 12 L18 15.500 Z" fill="#4aa0f0"/><path d="M1.500 16 L8 22.500 Q9.500 24 11 22.500 L12 21.500 L2.500 12 L1.500 13 Q0 14.500 1.500 16 Z" fill="#c8543a"/><path d="M2.300 14.800 L9.200 21.700" stroke="#f0a080" stroke-width="0.700"/></svg>
<!-- MEASURE -->
<svg style="left:655px;top:60px" width="36" height="88" viewBox="655 60 36 88"><g fill="none" stroke="#e81a1a" stroke-width="1.300" stroke-linejoin="round"><path d="M667 80.800 L677.500 70.800 M668.800 75.500 L672.300 79.200 M672.500 72 L676 75.700"/><path d="M664.300 83.300 L666 77.300 L670.200 81.700 Z M680 68.300 L678.300 74.300 L674.100 69.900 Z" fill="#e81a1a" stroke-width="0.800"/><path d="M671.800 109.700 L662.400 102.500 L672.500 94.600 L683.300 102.500 L679.700 114 L666.700 113.600 M665 97.500 L668.500 101.500 M676.500 95.500 L679 100.500 M684 107 L679.500 108.500 M672.500 111.500 L673 116 M665.500 107 L669 104"/><path d="M661.700 130.600 L671.800 121.900 L683.300 130.600 L679 142 L666 141.400 Z M663 136 L676.500 124.500 M665.500 141 L681.500 128 M671.500 141.800 L682 133.500 M665 125.500 L669 129.500 M676 123 L678.500 128 M684 135 L679.500 136.500 M672.500 139.500 L673 144 M660.500 134.500 L665 133.500"/></g></svg>
<div class="tri" style="left:681px;top:84px"></div>
<div class="tri" style="left:681px;top:112px"></div>
<div class="tri" style="left:681px;top:140px"></div>
<!-- MEDIA group -->
<svg style="left:707px;top:64px" width="25" height="24" viewBox="0 0 25 24"><rect x="0.300" y="1" width="19.500" height="19.500" fill="#fff" stroke="#748494" stroke-width="1.200"/><rect x="0.300" y="1" width="19.500" height="3.800" fill="#748494"/><rect x="0.300" y="16.700" width="19.500" height="3.800" fill="#748494"/><g fill="#fff"><rect x="2.500" y="2" width="2" height="1.600"/><rect x="6.500" y="2" width="2" height="1.600"/><rect x="10.500" y="2" width="2" height="1.600"/><rect x="14.500" y="2" width="2" height="1.600"/><rect x="2.500" y="17.800" width="2" height="1.600"/><rect x="6.500" y="17.800" width="2" height="1.600"/><rect x="10.500" y="17.800" width="2" height="1.600"/></g><path d="M7 6.500 L14.500 10.700 L7 15 Z" fill="#f5683a"/><circle cx="18" cy="17.500" r="5.800" fill="#6bb03c" stroke="#f3f3f3" stroke-width="1"/><path d="M14.800 17.500 H21.200 M18 14.300 V20.700" stroke="#fff" stroke-width="1.800"/></svg>
<svg style="left:707px;top:92px" width="25" height="24" viewBox="0 0 25 24"><circle cx="9.800" cy="10" r="9.800" fill="#38a8f2"/><path d="M8 15 V6 L14.500 4.500 V13.500" fill="none" stroke="#fff" stroke-width="1.500"/><ellipse cx="6.500" cy="15" rx="2" ry="1.600" fill="#fff"/><ellipse cx="13" cy="13.500" rx="2" ry="1.600" fill="#fff"/><circle cx="18" cy="17.500" r="5.800" fill="#6bb03c" stroke="#f3f3f3" stroke-width="1"/><path d="M14.800 17.500 H21.200 M18 14.300 V20.700" stroke="#fff" stroke-width="1.800"/></svg>
<svg style="left:707px;top:120px" width="25" height="24" viewBox="0 0 25 24"><path d="M10.500 1 L20 5.500 V16 L10.500 21 L1 16 V5.500 Z" fill="#3d8fe0"/><path d="M10.500 1 L20 5.500 L10.500 10 L1 5.500 Z" fill="#7cc0f5"/><path d="M10.500 10 L20 5.500 V16 L10.500 21 Z" fill="#2a6fc0"/><circle cx="18" cy="17.500" r="5.800" fill="#6bb03c" stroke="#f3f3f3" stroke-width="1"/><path d="M14.800 17.500 H21.200 M18 14.300 V20.700" stroke="#fff" stroke-width="1.800"/></svg>
<!-- MANAGE COMMENTS -->
<svg style="left:748px;top:64px" width="49" height="50" viewBox="0 0 49 50"><path d="M1.500 1 H35 Q36.500 1 36.500 2.500 V23.500 Q36.500 25 35 25 H15 L8 33.500 V25 H1.500 Q0 25 0 23.500 V2.500 Q0 1 1.500 1 Z" fill="#fbd55e"/><path d="M0 16 L25 1 H35 Q36.500 1 36.500 2.500 V8 L10 25 H1.500 Q0 25 0 23.500 Z" fill="#fde28a" opacity="0.600"/><path d="M5.500 7.500 H31 M5.500 13 H31 M5.500 18.500 H24" stroke="#efb52c" stroke-width="2"/><path d="M25.500 18.300 H38.300 L46.800 26.500 V45.200 Q46.800 47.500 44.500 47.500 H25.500 Q23.200 47.500 23.200 45.200 V20.600 Q23.200 18.300 25.500 18.300 Z" fill="#fff" stroke="#7d7d7d" stroke-width="2" stroke-linejoin="round"/><path d="M38.300 18.300 L46.800 26.500 H40 Q38.300 26.500 38.300 24.800 Z" fill="#7d7d7d"/><path d="M28.500 28 H36 M28.500 33.700 H41.600 M28.500 39.400 H41.600" stroke="#9a9a9a" stroke-width="1.800"/><path d="M12 27 Q13.500 34.500 21 34.500" fill="none" stroke="#6bb03c" stroke-width="3.200"/><path d="M19.500 28.500 L26.500 34.500 L19.500 40 Z" fill="#6bb03c"/></svg>
<!-- small comment icons -->
<svg style="left:806px;top:64px" width="25" height="22" viewBox="0 0 25 22"><path d="M4 1 H23 Q24 1 24 2 V14 Q24 15 23 15 H12.500 L8.500 20.500 V15 H4 Q3 15 3 14 V2 Q3 1 4 1 Z" fill="#fbd55e"/><path d="M13 5 H21 M13 8 H21 M8 11 H21" stroke="#efb52c" stroke-width="1.200"/><path d="M0.500 8.500 H9 M5.800 4.800 L9.500 8.500 L5.800 12.200" fill="none" stroke="#6bb03c" stroke-width="2"/></svg>
<svg style="left:846px;top:64px" width="25" height="24" viewBox="0 0 25 24"><path d="M1 6 H19 Q20 6 20 7 V17.500 Q20 18.500 19 18.500 H9.500 L5.500 23.500 V18.500 H1 Q0 18.500 0 17.500 V7 Q0 6 1 6 Z" fill="#fbd55e"/><path d="M3 10 H17 M3 13 H17 M3 16 H17" stroke="#efb52c" stroke-width="1.200"/><path d="M16 9 L19 6" stroke="#888" stroke-width="1.200"/><path d="M17.500 4.500 L20 1 L24 5 L20.500 7.500 Z" fill="#e04848"/></svg>
<svg style="left:806px;top:92px" width="26" height="22" viewBox="0 0 26 22"><path d="M1 1 H20 Q21 1 21 2 V14 Q21 15 20 15 H9.500 L5.500 20.500 V15 H1 Q0 15 0 14 V2 Q0 1 1 1 Z" fill="#fbd55e"/><path d="M3 5 H18 M3 8 H18 M3 11 H12" stroke="#efb52c" stroke-width="1.200"/><path d="M14.500 15.500 H23 M19.800 11.800 L23.500 15.500 L19.800 19.200" fill="none" stroke="#8a4fc8" stroke-width="2"/></svg>
<svg style="left:847px;top:93px" width="23" height="22" viewBox="0 0 23 22"><path d="M1 1 H21 Q22 1 22 2 V14 Q22 15 21 15 H9.500 L5.500 20.500 V15 H1 Q0 15 0 14 V2 Q0 1 1 1 Z" fill="#fbd55e"/><path d="M3 5 H19 M3 8 H19 M3 11 H19" stroke="#efb52c" stroke-width="1.200"/></svg>
<svg style="left:806px;top:120px" width="26" height="24" viewBox="0 0 26 24"><path d="M2 1 H22 Q23 1 23 2 V14 Q23 15 22 15 H10.500 L6.500 20.500 V15 H2 Q1 15 1 14 V2 Q1 1 2 1 Z" fill="#fbd55e"/><path d="M4 5 H20 M4 8 H20 M4 11 H14" stroke="#efb52c" stroke-width="1.200"/><ellipse cx="18" cy="17.500" rx="5.800" ry="5.200" fill="#f3f3f3" stroke="#8a8a8a" stroke-width="1.300"/><circle cx="18.500" cy="17.500" r="3" fill="#2f7fd8"/><circle cx="18.500" cy="17.500" r="1.300" fill="#111"/></svg>
<svg class="chev" style="left:835px;top:129px" viewBox="0 0 7 4"><path d="M0.5 0.3 L3.5 3.3 L6.5 0.3" stroke="#222" stroke-width="1.300" fill="none"/></svg>
<svg style="left:846px;top:120px" width="26" height="24" viewBox="0 0 26 24"><path d="M1 1 H21 Q22 1 22 2 V14 Q22 15 21 15 H9.500 L5.500 20.500 V15 H1 Q0 15 0 14 V2 Q0 1 1 1 Z" fill="#fbd55e"/><path d="M3 5 H19 M3 8 H19 M3 11 H14" stroke="#efb52c" stroke-width="1.200"/><path d="M18 12.500 Q24.500 12.500 24.500 17.500 Q24.500 19.500 22 19.500 Q20.500 19.500 20.800 21 Q21 23 18 23 Q11.500 22.500 11.500 17.500 Q12 12.500 18 12.500 Z" fill="#f0923a"/><circle cx="15" cy="16" r="1.200" fill="#e04848"/><circle cx="18.500" cy="15" r="1.200" fill="#6bb03c"/><circle cx="22" cy="16.500" r="1.200" fill="#3d8fe0"/><circle cx="14.500" cy="19.500" r="1.200" fill="#8a4fc8"/><circle cx="17.500" cy="21" r="1" fill="#f3f3f3"/></svg>
<!--RIBBON-ICONS-->
<!--DOCTABS-->
<div id="doctabs">
<svg style="left:0;top:0" width="889" height="32"><defs><pattern id="pTex" width="4" height="4" patternUnits="userSpaceOnUse"><rect width="4" height="4" fill="#818181"/><rect x="0" y="0" width="2" height="2" fill="#8b8b8b"/><rect x="2" y="2" width="2" height="2" fill="#8b8b8b"/></pattern></defs><rect width="889" height="32" fill="url(#pTex)"/></svg>
<div style="left:0;top:0;width:889px;height:1px;background:#383838"></div><div style="left:1px;top:1px;width:100px;height:32px;background:#f9e7ba;border-radius:4px 4px 0 0;border:1px solid #fbefd0;border-bottom:none"></div>
<div style="left:6px;top:30px;width:89.500px;height:2px;background:#bba773;border-radius:1px"></div>
<svg style="left:88.500px;top:6px" width="8" height="8" viewBox="0 0 9 9"><path d="M1.200 1.200 L7.300 7.300 M7.300 1.200 L1.200 7.300" stroke="#222" stroke-width="1.500"/></svg>
<div style="left:103px;top:4px;width:27px;height:27px;background:#cbcbcb;border-radius:3px"></div>
<svg style="left:109px;top:10px" width="15" height="15" viewBox="0 0 15 15"><path d="M0 7.500 H15 M7.500 0 V15" stroke="#222" stroke-width="1.200"/></svg>
<div style="left:857px;top:2.500px;width:29.500px;height:28.500px;background:#c8c8c8;border-radius:3px"></div>
<svg style="left:866px;top:10.500px" width="13" height="13" viewBox="0 0 13 13"><path d="M0.800 0.800 L12.200 12.200 M12.200 0.800 L0.800 12.200" stroke="#222" stroke-width="1.300"/></svg>
</div>
<span class="t" style="left:6.5px;top:171.3px;font-size:12px;letter-spacing:0.04px;color:#000;">Architecture *</span>
<div id="yline"></div>
<!--SIDEBAR-->
<div id="sidebar">

<svg style="left:23.500px;top:2px" width="7" height="8" viewBox="0 0 8 8"><path d="M1 0 V8 M7 0.500 L3 4 L7 7.500" fill="none" stroke="#222" stroke-width="1.100"/></svg>
<svg style="left:4px;top:13px" width="26" height="10"><defs><pattern id="pGrip" width="2" height="2" patternUnits="userSpaceOnUse"><rect width="1" height="1" fill="#b8b8b8"/></pattern></defs><rect width="26" height="10" fill="url(#pGrip)"/></svg>
<!-- bookmark -->
<svg style="left:9px;top:27px" width="15" height="21" viewBox="0 0 15 21"><path d="M0 0.500 H14 V20.500 L7 15 L0 20.500 Z" fill="#4a9ff0"/><path d="M0 0.500 H11 L0 13 Z" fill="#6cb5f5"/><path d="M11 0.500 H14 V5 H11 Z" fill="#2a78cc"/></svg>
<div class="gd" style="left:26px;top:47px"></div>
<!-- pages -->
<svg style="left:6px;top:54px" width="22" height="23" viewBox="0 0 22 23"><g fill="#fff" stroke="#8a8a8a" stroke-width="0.900" stroke-linejoin="round"><path d="M2 0.600 H10 Q11 0.600 11 1.600 V13 H2 Q1 13 1 12 V1.600 Q1 0.600 2 0.600 Z"/><path d="M6 3.600 H14 Q15 3.600 15 4.600 V17 H6 Q5 17 5 16 V4.600 Q5 3.600 6 3.600 Z"/></g><g fill="#fff" stroke="#5a5a5a" stroke-width="1.100" stroke-linejoin="round"><path d="M10 6.600 H17 L21 10.600 V21 Q21 22 20 22 H10 Q9 22 9 21 V7.600 Q9 6.600 10 6.600 Z"/></g><path d="M17 6.600 V10.600 H21 Z" fill="#6a6a6a"/><path d="M11.500 13.500 H18.500 M11.500 16 H18.500 M11.500 18.500 H18.500" stroke="#6a6a6a" stroke-width="1"/></svg>
<!-- comments -->
<svg style="left:5px;top:83px" width="23" height="21" viewBox="0 0 23 21"><path d="M1 0.500 H21 Q22 0.500 22 1.500 V13 Q22 14 21 14 H10 L5.500 20 V14 H1 Q0 14 0 13 V1.500 Q0 0.500 1 0.500 Z" fill="#fbd55e"/><path d="M0 9 L14 0.500 H21 Q22 0.500 22 1.500 V4 L6 14 H1 Q0 14 0 13 Z" fill="#fde28a" opacity="0.500"/><path d="M3 4 H19 M3 7 H19 M3 10 H19" stroke="#efb52c" stroke-width="1.200"/></svg>
<!-- paperclip -->
<svg style="left:4px;top:109px" width="24" height="22" viewBox="0 0 24 22"><path d="M14.500 6.500 L6.500 14.500 Q5 16.500 6.500 17.500 Q8 18.500 9.500 17 L20.500 6 Q23 3 20.500 1.500 Q18 0 15.500 2.500 L3 15 Q0 18.500 2.500 20.500 Q5 22 8 19.500 L17.500 10" fill="none" stroke="#a9a9a9" stroke-width="1.800" stroke-linecap="round"/></svg>
<div class="gd" style="left:26px;top:131px"></div>
<!-- form doc -->
<svg style="left:7px;top:138px" width="19" height="22" viewBox="0 0 19 22"><path d="M0.600 0.600 H12.500 L18 6 V21.400 H0.600 Z" fill="#fff" stroke="#6a6a6a" stroke-width="1.100"/><path d="M12.500 0.600 V6 H18 Z" fill="#555"/><rect x="3.500" y="4" width="2.400" height="2.400" fill="#fff" stroke="#3d8fe0" stroke-width="1"/><rect x="3.500" y="8.500" width="2.400" height="2.400" fill="#fff" stroke="#3d8fe0" stroke-width="1"/><path d="M8 5 H11 M8 9.500 H15 M3.500 13.500 H15" stroke="#6a6a6a" stroke-width="1"/><rect x="3.500" y="15.800" width="11.500" height="2.600" fill="#fff" stroke="#3d8fe0" stroke-width="1"/></svg>
<!-- signature doc -->
<svg style="left:7px;top:166px" width="19" height="22" viewBox="0 0 19 22"><path d="M0.600 0.600 H12.500 L18 6 V21.400 H0.600 Z" fill="#fff" stroke="#6a6a6a" stroke-width="1.100"/><path d="M12.500 0.600 V6 H18 Z" fill="#555"/><path d="M4.500 10 L3.200 15 L5.500 13.800 L6.500 12 M8 10 L9.500 15 L7.300 13.800" fill="#f0703a" stroke="#f0703a" stroke-width="0.800"/><circle cx="6.200" cy="7.500" r="3.300" fill="#f0703a"/><circle cx="6.200" cy="7.500" r="1.500" fill="#fbd55e"/><path d="M11.500 10.500 H15.500 M11.500 13.500 H15.500 M3.500 17.500 H15.500" stroke="#6a6a6a" stroke-width="1"/></svg>
<!-- layers -->
<svg style="left:5px;top:194px" width="23" height="21" viewBox="0 0 23 21"><path d="M11.500 8 L22.500 13.500 L11.500 20.500 L0.500 13.500 Z" fill="#1f6fc8"/><path d="M11.500 4.500 L22.500 10 L11.500 16.500 L0.500 10 Z" fill="#3d8fe0"/><path d="M11.500 0.500 L22.500 6 L11.500 12.500 L0.500 6 Z" fill="#5fb0f5"/></svg>
<div class="gd" style="left:26px;top:214px"></div>
<!-- content doc -->
<svg style="left:7px;top:222px" width="19" height="22" viewBox="0 0 19 22"><path d="M0.600 0.600 H12.500 L18 6 V21.400 H0.600 Z" fill="#fff" stroke="#6a6a6a" stroke-width="1.100"/><path d="M12.500 0.600 V6 H18 Z" fill="#555"/><rect x="4.500" y="2" width="6" height="5" fill="#4a9ff0"/><path d="M10 3.500 L14 10 H6.500 Z" fill="#6bb03c"/><circle cx="5.500" cy="8" r="3" fill="#fbd55e"/><text x="5" y="19" font-family="Liberation Serif,serif" font-weight="bold" font-size="9" text-anchor="middle" fill="#333">T</text><path d="M9.500 13 H15.500 M9.500 15.500 H15.500 M9.500 18 H15.500" stroke="#6a6a6a" stroke-width="0.900"/></svg>
<!-- location -->
<svg style="left:4px;top:248px" width="24" height="25" viewBox="0 0 24 25"><path d="M13 4 Q15 1 18 1.500 Q22.500 2.500 21.500 9 Q20.500 13 16 18" fill="none" stroke="#a3a3a3" stroke-width="2.600"/><path d="M8.500 4.500 Q15 4.500 15 11 Q15 15.500 8.500 23.500 Q2 15.500 2 11 Q2 4.500 8.500 4.500 Z" fill="#4a9ff0"/><circle cx="8.500" cy="10.500" r="3" fill="#fff"/></svg>
<div class="gd" style="left:26px;top:270px"></div>
<!-- tree -->
<svg style="left:7px;top:277px" width="20" height="23" viewBox="0 0 20 23"><path d="M2.500 4 V20.500 H15 M2.500 8.500 H15 M2.500 14.500 H15" fill="none" stroke="#6a6a6a" stroke-width="1"/><rect x="0.500" y="0.500" width="4" height="4" fill="#e04a3a" stroke="#3d8fe0" stroke-width="0.800"/><g fill="#fbd23c" stroke="#3d8fe0" stroke-width="0.900"><rect x="14" y="6.500" width="4" height="4"/><rect x="14" y="12.500" width="4" height="4"/><rect x="14" y="18.500" width="4" height="4"/></g></svg>
<!-- link -->
<svg style="left:4px;top:305px" width="25" height="23" viewBox="0 0 25 23"><path d="M12 6 L17 2.500 Q20 1 22 3.500 Q24 6.500 21.500 8.500 L15.500 12.500" fill="none" stroke="#9a9a9a" stroke-width="2.800" stroke-linecap="round"/><path d="M13 16 L8 19.500 Q5 21.500 3 19 Q1 16 3.500 13.500 L9.500 9.500 Q12 8 14 10.500" fill="none" stroke="#f5a623" stroke-width="2.800" stroke-linecap="round"/><path d="M9 12 L16 7.500" stroke="#9a9a9a" stroke-width="0"/></svg>
<div style="left:3px;top:332px;width:27px;height:1px;background:#c0c0c0"></div>
<!-- tag -->
<svg style="left:6px;top:338.500px" width="21.500" height="21.500" viewBox="0 0 21 21"><path d="M11.500 1.500 L19.500 0.800 L20 9 L8 20 L0.500 12 Z" fill="#4a9ff0"/><path d="M11 4.500 L17 10 L8 18 L2.500 12 Z" fill="#fbcf80"/><circle cx="16.500" cy="4" r="1.800" fill="#fff"/></svg>
<!-- z order -->
<svg style="left:5px;top:366px" width="22" height="23" viewBox="0 0 22 23"><g fill="#fff" stroke="#3d8fe0" stroke-width="1.100"><rect x="0.600" y="0.600" width="9" height="9"/><rect x="12.400" y="0.600" width="9" height="9"/><rect x="0.600" y="12.400" width="9" height="9"/><rect x="12.400" y="12.400" width="9" height="9"/></g><path d="M3 5 H19 L3.500 17.500 H19" fill="none" stroke="#f5a623" stroke-width="1.500"/></svg>
<svg style="left:11.500px;top:392.500px" width="8" height="9" viewBox="0 0 9 11"><path d="M0.800 0.800 L4.500 4.300 L8.200 0.800 M0.800 5.800 L4.500 9.300 L8.200 5.800" fill="none" stroke="#222" stroke-width="1.400"/></svg>
</div>
<!--DOC-->
<div id="doc">
<div style="left:0;top:0;width:840px;height:4px;background:linear-gradient(to bottom,#8a8a8a 0,#bdbdbd 1.200px,#e6e6e6 2.500px,#fff 4px)"></div>
</div>
<div id="docc" style="left:0;top:0;width:872px;height:562px;overflow:hidden">
<svg style="left:0;top:0" width="872" height="563" viewBox="0 0 872 563">
<defs><pattern id="pHatch" width="3" height="3" patternUnits="userSpaceOnUse"><rect width="3" height="3" fill="#fff"/><path d="M-0.500 0.500 L0.500 -0.500 M0 3 L3 0 M2.500 3.500 L3.500 2.500" stroke="#2f86e0" stroke-width="1.300"/></pattern>
<linearGradient id="gH" x1="0" y1="0" x2="1" y2="1"><stop offset="0" stop-color="#fffbe2"/><stop offset="1" stop-color="#f6d06a"/></linearGradient>
<radialGradient id="gG" cx="0.400" cy="0.350" r="0.700"><stop offset="0" stop-color="#a8f5a0"/><stop offset="1" stop-color="#3fc83f"/></radialGradient></defs>
<!-- drawing -->
<path d="M738.500 322.500 V563 M729 322.500 H872" stroke="#000" stroke-width="1" fill="none"/>
<path d="M732.500 316 L746 328.500" stroke="#000" stroke-width="2.400"/>
<path d="M548.2 580.0 A953.3 953.3 0 0 1 899.9 346.7" fill="none" stroke="#000" stroke-width="2.2"/>
<path d="M593.4 579.9 A921.2 921.2 0 0 1 899.9 381.1" fill="none" stroke="#000" stroke-width="2.0"/>
<path d="M597.9 580.0 A918.0 918.0 0 0 1 899.9 384.5" fill="none" stroke="#000" stroke-width="0.9"/>
<path d="M621.4 580.0 A901.8 901.8 0 0 1 899.9 402.0" fill="none" stroke="#000" stroke-width="1.0"/>
<path d="M727.9 579.9 A832.6 832.6 0 0 1 899.9 477.1" fill="none" stroke="#000" stroke-width="1.3"/>
<path d="M575.5 560.9h1.6M583.8 558.3h1.3M585.6 558.3h1.3M594.9 561.7h1.6M593.6 559.1h1.0M593.0 557.2h1.0M598.5 561.7h1.3M591.7 553.3h1.0M601.4 561.9h1.6M588.9 547.6h1.3M600.7 559.3h1.3M598.0 555.3h1.0M599.2 555.8h1.3M604.4 559.5h1.0M590.9 544.2h1.0M599.9 552.2h1.3M599.4 551.0h1.6M592.0 542.0h1.0M604.9 554.1h1.6M600.8 547.9h1.6M609.0 555.2h1.0M607.0 552.5h1.0M612.0 554.3h1.3M601.8 542.1h1.6M611.3 551.6h1.3M599.2 536.7h1.0M602.5 538.9h1.0M601.3 536.5h1.3M606.4 541.0h1.3M606.5 539.9h1.3M607.2 539.3h1.6M605.4 536.1h1.0M604.6 533.3h1.3M606.8 535.0h1.6M619.6 544.3h1.0M606.7 528.1h1.6M612.5 533.3h1.3M613.4 532.5h1.3M620.7 539.4h1.6M617.7 534.6h1.3M620.3 536.7h1.6M613.0 527.5h1.6M619.3 533.8h1.0M615.4 527.1h1.3M626.4 538.5h1.3M613.7 523.4h1.3M621.9 531.6h1.3M628.7 538.5h1.0M629.0 537.5h1.0M624.2 529.4h1.6M624.4 528.8h1.0M625.2 527.3h1.6M626.0 526.8h1.6M633.2 533.6h1.6M621.5 518.4h1.3M633.9 531.1h1.0M635.8 531.5h1.6M632.7 525.8h1.3M627.9 519.5h1.6M639.7 532.0h1.6M627.5 516.0h1.6M629.0 516.7h1.6M629.0 515.3h1.0M634.0 519.3h1.6M640.1 526.0h1.0M627.8 510.2h1.0M642.5 525.8h1.0M640.2 521.5h1.6M642.9 523.0h1.6M633.3 510.4h1.3M641.7 518.8h1.6M634.8 508.6h1.3M646.3 520.8h1.3M645.9 518.9h1.6M648.4 520.1h1.0M637.9 505.4h1.3M646.4 513.8h1.0M653.8 519.3h1.6M652.1 515.2h1.0M649.9 511.4h1.6M654.8 516.1h1.6M647.5 506.1h1.3M649.5 508.1h1.6M656.5 515.5h1.3M650.6 507.1h1.6M657.7 514.4h1.6M650.9 504.0h1.0M645.9 497.1h1.0M652.7 504.3h1.3M655.5 505.9h1.6M654.9 503.0h1.3M659.2 507.4h1.3M652.4 497.2h1.6M652.9 497.4h1.3M664.2 510.9h1.3M651.9 493.4h1.3M664.4 507.7h1.0M665.9 507.5h1.3M655.1 492.2h1.0M661.9 500.2h1.3M659.3 496.0h1.3M661.7 497.6h1.3M667.1 502.6h1.3M662.0 494.3h1.3M661.4 491.6h1.0M661.8 490.5h1.0M664.1 491.8h1.6M673.8 503.1h1.3M674.4 503.3h1.3M674.0 502.1h1.6M660.7 484.1h1.3M670.9 496.4h1.0M669.7 494.0h1.0M666.1 487.3h1.0M668.2 488.7h1.3M667.2 486.2h1.0M671.2 489.2h1.6M670.2 485.8h1.6M668.2 481.5h1.6M676.5 491.4h1.6M674.0 486.2h1.6M676.9 488.9h1.3M681.2 492.4h1.6M681.5 491.4h1.3M676.1 482.0h1.0M681.0 488.0h1.0M679.0 483.5h1.3M675.0 473.9h1.3M682.0 481.7h1.0M689.5 490.2h1.3M688.5 487.1h1.6M685.4 481.9h1.3M685.5 480.8h1.6M693.8 489.9h1.0M680.4 470.2h1.6M693.7 485.1h1.6M693.5 483.9h1.3M684.0 469.8h1.6M687.9 474.3h1.0M695.9 482.4h1.6M688.9 471.4h1.0M686.8 467.5h1.3M686.8 466.1h1.3M695.4 476.5h1.6M688.1 464.7h1.0M699.5 479.2h1.3M691.8 467.0h1.0M694.9 467.3h1.0M695.0 465.4h1.6M696.1 465.6h1.6M705.0 477.4h1.0M694.7 461.2h1.0M704.4 474.2h1.0M709.4 478.3h1.0M709.1 476.4h1.0M705.5 469.0h1.3M706.0 469.0h1.3M702.5 461.0h1.0M713.8 475.5h1.6M710.6 469.1h1.0M703.5 457.3h1.6M707.6 461.1h1.6M712.1 466.8h1.6M714.7 469.5h1.0M704.4 453.6h1.6M712.0 463.6h1.0M717.8 470.3h1.6M719.5 471.0h1.3M719.3 470.0h1.3M719.0 468.2h1.0M716.6 462.3h1.3M712.8 454.6h1.3M712.8 452.7h1.6M721.3 462.9h1.3M724.2 465.7h1.6M722.9 460.7h1.6M725.8 463.5h1.6M718.7 451.2h1.6M721.0 452.1h1.0M724.2 454.5h1.3M718.4 444.8h1.3M725.5 454.4h1.0M725.3 451.8h1.6M731.5 459.0h1.3M733.2 459.2h1.3M730.7 453.7h1.3M734.0 456.8h1.0M732.1 451.6h1.6M728.0 443.7h1.3M730.0 445.9h1.0M733.1 449.0h1.3M734.4 450.0h1.0M732.6 446.4h1.6M731.0 442.8h1.3M733.7 444.7h1.3M730.6 437.4h1.3M737.4 445.8h1.6M739.1 446.2h1.6M738.5 444.0h1.0M745.3 453.5h1.3M738.7 441.7h1.3M735.9 435.2h1.3M737.0 434.6h1.3M742.1 441.6h1.3M737.6 432.3h1.6M742.1 437.5h1.3M749.8 447.5h1.3M753.5 448.2h1.6M750.2 441.6h1.0M749.5 439.1h1.3M743.9 428.6h1.3M754.1 443.7h1.6M755.3 443.2h1.3M758.7 446.4h1.6M757.4 441.8h1.0M748.6 424.5h1.3M758.3 438.0h1.3M761.5 441.3h1.3M762.0 440.0h1.0M762.3 439.0h1.0M761.9 436.3h1.6M765.0 439.7h1.3M764.9 437.9h1.0M767.1 439.2h1.3M768.2 439.0h1.0M766.6 433.9h1.6M767.5 433.4h1.0M764.0 425.6h1.6M761.3 418.3h1.0M763.8 421.2h1.3M764.1 420.9h1.6M766.8 423.6h1.6M773.7 433.0h1.0M771.5 426.6h1.6M767.6 418.8h1.0M771.6 423.5h1.6M778.4 434.2h1.6M774.0 424.8h1.3M779.7 434.0h1.3M771.4 418.4h1.0M769.9 414.0h1.6M772.5 417.8h1.0M781.7 432.2h1.6M773.2 415.8h1.3M773.7 414.3h1.3M778.0 421.2h1.6M783.9 430.4h1.3M777.0 415.8h1.0M777.3 414.0h1.0M780.9 418.9h1.0M777.4 410.3h1.3M783.0 419.1h1.0M780.8 413.3h1.6M787.4 422.9h1.0M789.9 426.3h1.3M779.8 406.4h1.0M785.1 414.7h1.6M784.3 412.1h1.6M791.1 423.1h1.0M785.0 409.2h1.3M785.5 408.6h1.3M792.9 421.0h1.3M790.1 414.7h1.0M794.3 420.6h1.0M794.5 418.4h1.6M795.9 420.3h1.3M790.7 409.8h1.0M797.4 420.3h1.3M797.0 418.1h1.0M796.4 416.0h1.0M796.0 414.6h1.6M798.1 415.7h1.3M800.7 418.6h1.0M798.0 412.7h1.6M795.0 405.9h1.6M799.3 413.0h1.3M799.2 411.0h1.6M802.6 415.5h1.3M804.7 416.8h1.6M800.6 406.9h1.6M800.2 404.2h1.0M804.5 410.9h1.3M805.5 409.5h1.3M807.7 412.9h1.0M809.3 413.7h1.0M803.4 400.5h1.0M809.7 410.9h1.3M813.2 415.7h1.3M803.9 395.4h1.3M808.8 402.1h1.3M808.1 396.0h1.6M810.9 400.2h1.3M810.6 397.8h1.0M811.9 399.5h1.3M819.1 411.4h1.3M816.8 404.4h1.0M818.4 406.1h1.0M822.3 411.7h1.3M816.6 399.2h1.6M813.8 392.9h1.6M819.7 403.6h1.0M816.6 394.5h1.6M823.1 405.9h1.3M820.2 399.0h1.3M822.4 401.3h1.3M824.4 403.6h1.0M819.5 392.4h1.0M819.1 388.5h1.3M826.9 399.8h1.6M827.1 398.3h1.3M825.0 391.3h1.0M824.1 387.7h1.3M832.8 403.0h1.3M833.7 402.5h1.6M829.1 390.2h1.3M826.5 383.4h1.0M834.6 398.1h1.6M828.0 382.9h1.0M828.0 381.1h1.0M831.3 386.9h1.0M830.0 382.7h1.3M839.7 401.3h1.6M836.7 393.7h1.0M837.3 393.5h1.6M833.4 382.1h1.0M833.7 381.2h1.3M841.6 394.7h1.3M839.5 388.0h1.0M836.4 380.0h1.0M842.6 392.5h1.0M845.5 394.5h1.6M846.6 394.7h1.0M844.4 388.7h1.6M841.4 378.7h1.6M849.9 396.3h1.6M846.2 385.6h1.6M848.8 390.4h1.6M851.2 390.9h1.0M853.3 392.9h1.6M848.2 381.1h1.3M851.0 385.5h1.0M850.1 377.8h1.6M854.7 386.6h1.3M853.9 381.8h1.0M855.4 382.8h1.3M853.7 377.3h1.3M857.6 384.2h1.0M862.4 391.2h1.3M855.5 372.3h1.6M856.0 370.3h1.6M862.0 380.5h1.3M862.4 379.0h1.6M863.5 376.0h1.0M867.0 381.7h1.6M863.8 372.0h1.3M862.1 366.4h1.3M870.2 384.2h1.0M864.6 370.0h1.3M865.0 367.8h1.3M870.5 379.7h1.0M868.8 366.6h1.6" fill="none" stroke="#111" stroke-width="1.150"/>
<path d="M594.5 562.8L591.4 562.6L593.1 560.0ZM609.0 552.9L612.6 554.2L609.7 556.6ZM612.9 542.0L616.5 541.2L615.3 544.7ZM615.7 540.1L611.6 540.7L613.2 536.8ZM615.4 531.1L619.4 529.2L619.0 533.7ZM629.2 534.2L631.4 536.8L628.0 537.4ZM619.8 519.5L620.0 523.4L616.5 521.7ZM640.8 513.2L641.6 517.5L637.5 516.1ZM651.4 514.9L647.8 517.3L647.5 513.0ZM655.2 494.4L655.6 497.5L652.7 496.3ZM675.7 494.7L671.4 494.9L673.5 491.1ZM669.3 482.7L667.7 485.8L665.9 482.9ZM682.1 487.8L685.7 486.9L684.7 490.5ZM688.3 487.3L685.1 488.5L685.6 485.2ZM686.9 477.5L683.5 479.9L683.1 475.7ZM697.5 487.3L695.4 491.1L693.1 487.4ZM687.4 469.8L688.2 473.4L684.7 472.3ZM699.5 479.1L700.3 475.6L703.0 478.1ZM696.4 464.6L700.4 463.6L699.3 467.5ZM710.4 474.0L713.1 475.6L710.4 477.1ZM716.2 466.0L718.9 468.5L715.3 469.5ZM722.4 463.5L720.4 460.0L724.5 460.1ZM742.6 433.0L738.6 431.9L741.5 428.9ZM740.5 431.6L739.8 428.3L743.0 429.4ZM763.6 425.4L759.8 423.7L763.1 421.2ZM800.5 405.6L801.8 402.2L804.0 405.0ZM814.0 414.6L814.9 411.2L817.4 413.6ZM808.1 392.4L810.9 390.9L810.8 394.1ZM820.5 393.8L822.4 390.4L824.4 393.7ZM842.0 395.5L838.4 394.1L841.4 391.7ZM840.3 389.9L843.8 389.4L842.5 392.7ZM847.5 385.7L845.2 388.0L844.4 384.8ZM840.4 376.1L842.2 372.1L844.8 375.7ZM853.1 386.0L855.0 388.9L851.6 389.1ZM852.5 385.7L854.1 382.4L856.3 385.4ZM856.2 388.7L860.1 388.6L858.2 392.0ZM855.3 378.9L858.9 380.8L855.5 383.0ZM861.3 378.9L863.8 375.9L865.1 379.6ZM870.0 369.9L871.1 373.5L867.4 372.7Z" fill="none" stroke="#111" stroke-width="0.900"/>
<text transform="translate(758.500,550) rotate(-33.500)" font-family="Liberation Sans,sans-serif" font-size="12" fill="#000">22' - 8 3/4"</text>
<!-- box 1 -->
<rect x="107" y="339" width="108" height="20" fill="none" stroke="url(#pHatch)" stroke-width="2"/>
<path d="M108.500 356 q1.250 -1.800 2.500 0 t2.500 0 t2.500 0 t2.500 0 t2.500 0 t2.500 0 t2.500 0 t2.500 0 t2.500 0 t2.500 0 t2.500 0 t2.500 0 t2.500 0 t2.500 0 t2.500 0 t2.500 0 t2.500 0 t2.500 0 t2.500 0 M165.500 356 q1.250 -1.800 2.500 0 t2.500 0 t2.500 0 t2.500 0 t2.500 0 t2.500 0 t2.500 0 t2.500 0 t2.500 0 t2.500 0 t2.500 0 t2.500 0 t2.500 0 t2.500 0 t2.500 0 t2.500 0 t2.500 0 t2.500 0 t2.500 0" fill="none" stroke="#f04a3a" stroke-width="1.100"/>
<!-- box 2 -->
<rect x="107" y="414.500" width="108" height="20" fill="none" stroke="url(#pHatch)" stroke-width="2"/>
<path d="M161 398 V411" stroke="#333" stroke-width="1" stroke-dasharray="2.500 2"/>
<circle cx="161" cy="393" r="4.800" fill="url(#gG)" stroke="#2a2a2a" stroke-width="1"/>
</svg>
<span class="t" style="left:110.5px;top:265.3px;font-size:14px;letter-spacing:1.22px;color:#505050;font-family:'Liberation Mono',monospace">Typewriter</span>
<span class="t" style="left:108.5px;top:341.3px;font-size:14px;letter-spacing:1.31px;color:#404040;font-family:'Liberation Mono',monospace">Lorem Ipsum</span>
<span class="t" style="left:109.5px;top:416.8px;font-size:14px;letter-spacing:1.11px;color:#404040;font-family:'Liberation Mono',monospace">Lorem Ipsum</span>
<svg style="left:0;top:0" width="872" height="563" viewBox="0 0 872 563">
<circle cx="161" cy="425" r="5.300" fill="#fff" stroke="#8a8a8a" stroke-width="1"/><rect x="160.300" y="424.300" width="1.400" height="1.400" fill="#333"/>
<g fill="url(#gH)" stroke="#2a2a2a" stroke-width="1"><rect x="103" y="410.500" width="9.500" height="9.500" rx="2"/><rect x="209" y="410.500" width="9.500" height="9.500" rx="2"/><rect x="103" y="429" width="9.500" height="9.500" rx="2"/><rect x="209" y="429" width="9.500" height="9.500" rx="2"/><rect x="157" y="411.500" width="8" height="7.500" rx="1.800"/><rect x="157" y="430" width="8" height="7.500" rx="1.800"/></g>
</svg>
</div>
<!--VSCROLL-->
<div id="vscroll">
<div style="left:0;top:0;width:1.500px;height:368px;background:#8a8a8a"></div>
<svg style="left:4.500px;top:4.500px" width="8.500" height="5.500" viewBox="0 0 9 6"><path d="M0.700 5.300 L4.500 1.200 L8.300 5.300" fill="none" stroke="#555" stroke-width="1.300"/></svg>
<div style="left:6px;top:14.500px;width:5px;height:16.500px;background:#8a8a8a;border-radius:2.500px"></div>
<svg style="left:5px;top:358px" width="7.500" height="5" viewBox="0 0 9 6"><path d="M0.700 0.700 L4.500 4.800 L8.300 0.700" fill="none" stroke="#444" stroke-width="1.400"/></svg>
<svg style="left:7px;top:384px" width="7.500" height="7" viewBox="0 0 9 8"><path d="M0.700 0.700 L4.500 4.300 L8.300 0.700 M0.500 7 H8.500" fill="none" stroke="#333" stroke-width="1.300"/></svg>
</div>
<div id="hscroll">
<div style="left:0;top:0;width:840px;height:1px;background:#e4e4e4"></div><div style="left:0;top:1px;width:840px;height:1px;background:#b4b4b4"></div><div style="left:0;top:2px;width:840px;height:1px;background:#6a6a6a"></div>
<svg style="left:3.500px;top:7.500px" width="6" height="7" viewBox="0 0 6 8"><path d="M5 0.500 L1 4 L5 7.500" fill="none" stroke="#333" stroke-width="1.300"/></svg>
<div style="left:14px;top:8px;width:502px;height:5px;background:#8a8a8a;border-radius:2.500px"></div>
<svg style="left:830px;top:7.500px" width="6" height="7" viewBox="0 0 6 8"><path d="M1 0.500 L5 4 L1 7.500" fill="none" stroke="#333" stroke-width="1.300"/></svg>
</div>
<div id="bottombar">
<svg style="left:0;top:0" width="856" height="32" viewBox="33 580 856 32">
<defs><pattern id="pGrip2" width="2" height="2" patternUnits="userSpaceOnUse"><rect width="1" height="1" fill="#b0b0b0"/></pattern></defs>
<g fill="url(#pGrip2)"><rect x="34" y="584" width="10" height="16"/><rect x="163" y="584" width="10" height="16"/><rect x="440" y="584" width="10" height="16"/><rect x="565" y="584" width="10" height="16"/><rect x="826" y="584" width="10" height="16"/></g>
<g fill="none" stroke="#222" stroke-width="1.150"><path d="M35.5 601.500 V608 M40.5 601.800 L37.2 604.800 L40.5 607.800"/><path d="M164.5 601.500 V608 M169.5 601.800 L166.2 604.800 L169.5 607.800"/><path d="M441.5 601.500 V608 M446.5 601.800 L443.2 604.800 L446.5 607.800"/><path d="M566.5 601.500 V608 M571.5 601.800 L568.2 604.800 L571.5 607.800"/><path d="M827.5 601.500 V608 M832.5 601.800 L829.2 604.800 L832.5 607.800"/></g>
<!-- gears -->
<circle cx="53.500" cy="591.500" r="5.700" fill="none" stroke="#8a8a8a" stroke-width="3.600" stroke-dasharray="2.500 1.976"/><circle cx="53.500" cy="591.500" r="4.400" fill="#f0f0f0" stroke="#8a8a8a" stroke-width="2.200"/>
<circle cx="62.800" cy="600.500" r="5.100" fill="none" stroke="#f5a030" stroke-width="3.400" stroke-dasharray="2.300 1.705"/><circle cx="62.800" cy="600.500" r="3.900" fill="#f0f0f0" stroke="#f5a030" stroke-width="2"/>
<path d="M131 593.500 L134 596.500 L137 593.500" fill="none" stroke="#222" stroke-width="1.300"/>
<!-- first/prev -->
<circle cx="187" cy="595.500" r="10.500" fill="#f6f6f6" stroke="#b4b4b4" stroke-width="1"/><path d="M182.800 590.300 V600.700 M191 590.500 L185.500 595.500 L191 600.500" fill="none" stroke="#8cc4f4" stroke-width="2.200"/>
<circle cx="214.500" cy="595.500" r="10.500" fill="#f6f6f6" stroke="#b4b4b4" stroke-width="1"/><path d="M217.300 590.500 L211.800 595.500 L217.300 600.500" fill="none" stroke="#8cc4f4" stroke-width="2.200"/>
<rect x="230.500" y="584.500" width="89.500" height="21.500" rx="3" fill="#fff" stroke="#a8a8a8" stroke-width="1"/>
<path d="M304.800 602.500 L310 589.500" stroke="#444" stroke-width="1.100"/>
<!-- next/last -->
<circle cx="335.500" cy="595.500" r="10.500" fill="#fafafa" stroke="#555" stroke-width="1"/><path d="M332.500 590.500 L338 595.500 L332.500 600.500" fill="none" stroke="#2f92f2" stroke-width="2.400"/>
<circle cx="363.500" cy="595.500" r="10.500" fill="#fafafa" stroke="#555" stroke-width="1"/><path d="M359.500 590.500 L365 595.500 L359.500 600.500 M368 590.500 V600.500" fill="none" stroke="#2f92f2" stroke-width="2.400"/>
<path d="M378.500 582 V610" stroke="#c6c6c6" stroke-width="1"/>
<circle cx="395" cy="595.500" r="10.500" fill="#fafafa" stroke="#555" stroke-width="1"/><path d="M401 595.500 H390 M394 591 L389.500 595.500 L394 600" fill="none" stroke="#6bb03c" stroke-width="2.500"/>
<circle cx="423.500" cy="595.500" r="10.500" fill="#f6f6f6" stroke="#c2c2c2" stroke-width="1"/><path d="M417.500 595.500 H428.500 M424.500 591 L429 595.500 L424.500 600" fill="none" stroke="#b4d89a" stroke-width="2.500"/>
<!-- layout icons -->
<path d="M456.500 585.500 H466.500 L471.500 590.500 V605.500 H456.500 Z" fill="#fff" stroke="#555" stroke-width="1"/><path d="M466.500 585.500 V590.500 H471.500 Z" fill="#444"/>
<rect x="478.500" y="582.500" width="27" height="27" fill="#e9d6a2" stroke="#c9b47c" stroke-width="1"/>
<path d="M484.500 584 V594 H500 V584" fill="#fff" stroke="#555" stroke-width="1"/><path d="M484.500 596.500 H495.500 L500 601 V606 H484.500 Z" fill="#fff" stroke="#555" stroke-width="1"/><path d="M495 596.500 V601.500 H500 Z" fill="#444"/>
<path d="M509.500 588 H516 L520 592 V602.500 H509.500 Z M522.500 588 H528.500 L532.500 592 V602.500 H522.500 Z" fill="#fff" stroke="#555" stroke-width="1"/><path d="M516 588 V592 H520 Z M528.500 588 V592 H532.500 Z" fill="#444"/>
<path d="M536.500 584 V593 H546.500 V584 M549.500 584 V593 H559.500 V584" fill="#fff" stroke="#555" stroke-width="1"/><path d="M536.500 606 V596.500 H543 L546.500 600 V606 M549.500 606 V596.500 H556 L559.500 600 V606" fill="#fff" stroke="#555" stroke-width="1"/><path d="M543 596.500 V600 H546.500 Z M556 596.500 V600 H559.500 Z" fill="#444"/>
<!-- zoom box -->
<rect x="577.500" y="584.500" width="80" height="21.500" rx="3" fill="#fff" stroke="#a8a8a8" stroke-width="1"/>
<path d="M646.500 593.500 L649.500 596.500 L652.500 593.500" fill="none" stroke="#222" stroke-width="1.300"/>
<path d="M660.500 582 V610" stroke="#c6c6c6" stroke-width="1"/>
<circle cx="677" cy="595.500" r="10.500" fill="#fafafa" stroke="#555" stroke-width="1"/><path d="M671.500 595.500 H682.500" stroke="#2f92f2" stroke-width="2.200"/>
<path d="M694.500 595.500 H743" stroke="#8a8a8a" stroke-width="3" stroke-linecap="round"/><path d="M743 595.500 H791" stroke="#b9b9b9" stroke-width="3" stroke-linecap="round"/>
<circle cx="742.800" cy="595.500" r="9" fill="#fafafa" stroke="#444" stroke-width="1"/><circle cx="742.800" cy="595.500" r="3.300" fill="#8a8a8a"/><path d="M742.800 589.500 V601.500" stroke="#9a9a9a" stroke-width="0.800"/>
<circle cx="809" cy="595.500" r="10.500" fill="#fafafa" stroke="#555" stroke-width="1"/><path d="M803.500 595.500 H814.500 M809 590 V601" stroke="#2f92f2" stroke-width="2.200"/>
<rect x="842.500" y="590.500" width="15" height="10.500" fill="#fff" stroke="#9a9a9a" stroke-width="1"/><rect x="846.500" y="592" width="7.500" height="7.500" fill="#5aa7ee"/><path d="M844.500 592 V600 M856 592 V600" stroke="#9a9a9a" stroke-width="1" stroke-dasharray="1 1"/>
<path d="M868 593.500 L871 596.500 L874 593.500" fill="none" stroke="#a0a0a0" stroke-width="1.300"/>
</svg>
</div>
<span class="t" style="left:73.5px;top:587.8px;font-size:12px;letter-spacing:-0.15px;color:#000;">Options...</span>
<span class="t" style="left:296.5px;top:587.5px;font-size:13px;letter-spacing:-1.23px;color:#222;">1</span>
<span class="t" style="left:311.0px;top:585.7px;font-size:9.5px;letter-spacing:0.22px;color:#5a6a7a;">8</span>
<span class="t" style="left:581.0px;top:587.8px;font-size:12px;letter-spacing:-1.40px;color:#000;">100%</span>
</div>
</body></html>
